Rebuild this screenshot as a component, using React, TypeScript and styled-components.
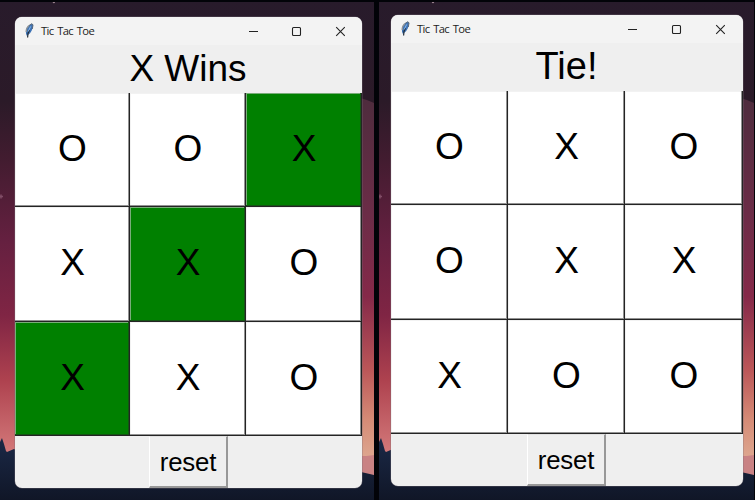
import React from "react";
import styled, { createGlobalStyle } from "styled-components";

const GlobalStyle = createGlobalStyle`
  * { box-sizing: border-box; }
  body { margin: 0; background: #020308; overflow: hidden; }
`;

const Desktops = styled.main`
  display: flex;
  gap: 5px;
  width: 755px;
  height: 500px;
  padding: 2px 1px 0 0;
  background: #020308;
`;

const Desktop = styled.section<{ $pad: string; $width: number }>`
  position: relative;
  width: ${(p) => p.$width}px;
  flex: none;
  height: 498px;
  padding: ${(p) => p.$pad};
  overflow: hidden;
`;

const Wallpaper = styled.svg`
  position: absolute;
  inset: 0;
  width: 100%;
  height: 100%;
`;

const Frame = styled.article`
  position: relative;
  display: flex;
  flex-direction: column;
  height: 100%;
  border-radius: 7px;
  overflow: hidden;
  background: #efefef;
  box-shadow: 0 0 0 0.5px rgba(120, 110, 120, 0.6);
`;

const TitleBar = styled.header`
  display: flex;
  align-items: center;
  flex: none;
  height: 28px;
  padding-left: 8px;
  background: #f3f3f3;
`;

const Title = styled.span`
  margin-left: 5px;
  flex: 1;
  font: 11.2px/16px "Open Sans", "Noto Sans", sans-serif;
  letter-spacing: -0.58px;
  word-spacing: 1.2px;
  color: #222;
  white-space: nowrap;
`;

const Controls = styled.div<{ $step: number; $end: number }>`
  display: grid;
  grid-template-columns: repeat(3, ${(p) => p.$step}px);
  justify-items: center;
  margin-right: ${(p) => p.$end}px;
`;

const ControlIcon = styled.svg`
  width: 11px;
  height: 11px;
  fill: none;
  stroke: #222;
  stroke-width: 1.1;
`;

const Status = styled.div<{ $size: number }>`
  flex: none;
  height: 48px;
  padding-right: 1px;
  font: ${(p) => p.$size}px/47px "Liberation Sans", Arial, sans-serif;
  text-align: center;
  color: #000;
`;

const Board = styled.div<{ $columns: string; $rows: string }>`
  display: grid;
  flex: none;
  grid-template-columns: ${(p) => p.$columns};
  grid-template-rows: ${(p) => p.$rows};
`;

const Cell = styled.button<{ $won: boolean }>`
  display: flex;
  align-items: center;
  justify-content: center;
  padding: 0 0 2px 1px;
  border: 0 solid #242424;
  border-width: 0 1px 1px 0;
  border-radius: 0;
  background: ${(p) => (p.$won ? "#008000" : "#fff")};
  box-shadow: ${(p) =>
    p.$won
      ? "inset -1px -1px #145514, inset 1px 1px #79ad79"
      : "inset -1px -1px #929292, inset 1px 1px #f2f2f2"};
  font: 37px/42px "Liberation Sans", Arial, sans-serif;
  color: #000;
`;

const Footer = styled.footer<{ $offset: number }>`
  display: flex;
  flex: 1;
  padding-left: ${(p) => p.$offset}px;
`;

const ResetButton = styled.button`
  width: 79px;
  height: 52px;
  padding: 1px 0 0;
  border-style: solid;
  border-width: 1px 2px 2px 1px;
  border-color: #e1e1e1 #989898 #989898 #fff;
  border-radius: 0;
  background: #efefef;
  font: 25.8px/48px "Liberation Sans", Arial, sans-serif;
  letter-spacing: -0.2px;
  color: #000;
`;

function Scenery({ id }: { id: string }) {
  return (
    <Wallpaper viewBox="0 0 375 498" preserveAspectRatio="none" aria-hidden="true">
      <defs>
        <linearGradient id={`${id}-sky`} x1="0" y1="0" x2="0" y2="1">
          <stop offset="0" stopColor="#281b2b" />
          <stop offset=".2" stopColor="#2b1a28" />
          <stop offset=".32" stopColor="#431c30" />
          <stop offset=".48" stopColor="#652040" />
          <stop offset=".63" stopColor="#802544" />
          <stop offset=".76" stopColor="#ae424f" />
          <stop offset=".9" stopColor="#d27778" />
        </linearGradient>
        <linearGradient id={`${id}-planet`} x1="0" y1="0" x2="0" y2="1">
          <stop offset="0" stopColor="#4d2c3d" />
          <stop offset=".33" stopColor="#6b2c47" />
          <stop offset=".56" stopColor="#852949" />
          <stop offset=".76" stopColor="#bb5658" />
          <stop offset=".9" stopColor="#d58b76" />
          <stop offset="1" stopColor="#dda58e" />
        </linearGradient>
        <linearGradient id={`${id}-hill`} x1="0" y1="0" x2="0" y2="1">
          <stop offset="0" stopColor="#1b2947" />
          <stop offset="1" stopColor="#101627" />
        </linearGradient>
      </defs>
      <rect width="375" height="498" fill={`url(#${id}-sky)`} />
      <path d="M340 92Q360 94 375 101V454H340Z" fill={`url(#${id}-planet)`} />
      <path d="M340 454Q360 456 375 453V480H340Z" fill="#c98284" />
      <path
        d="M0 440L2 436L4 442L6 449L7 450L14 447L30 454L100 470L310 468L362 470L375 473V498H0Z"
        fill={`url(#${id}-hill)`}
      />
      <path d="M1 192.5V196.5M-1 194.5H3" stroke="#95627b" strokeWidth="1.5" opacity=".7" />
      <circle cx="54" cy="0" r="1.2" fill="#9c8490" />
    </Wallpaper>
  );
}

function Feather() {
  return (
    <svg width="13" height="16" viewBox="0 0 13 16" aria-hidden="true">
      <path d="M4 13C2 10 3 5 6 2.5L9 .7L10 2C10 6 8 10 5 12Z" fill="#3e73b5" />
      <path d="M6 2.5L9 .7L10 2L9.3 6" fill="none" stroke="#596879" strokeWidth="1" />
      <path d="M3.2 9Q3.1 5 6 2.5" fill="none" stroke="#8b9298" strokeWidth="1.4" />
      <path d="M4.6 14.5L5 10.5L6.5 7" fill="none" stroke="#202a36" strokeWidth="1.2" />
      <path d="M5.2 8.5L7.7 3.4" stroke="#8cb9ea" strokeWidth="1" />
    </svg>
  );
}

interface GameProps {
  status: string;
  statusSize: number;
  marks: string;
  winning?: number[];
  columns: string;
  rows: string;
  footerOffset: number;
  controlStep: number;
  controlEnd: number;
}

function Game(props: GameProps) {
  return (
    <Frame>
      <TitleBar>
        <Feather />
        <Title>Tic Tac Toe</Title>
        <Controls $step={props.controlStep} $end={props.controlEnd}>
          <ControlIcon viewBox="0 0 11 11"><path d="M1 5.5H10" /></ControlIcon>
          <ControlIcon viewBox="0 0 11 11"><rect x="1.5" y="1.5" width="8" height="8" rx="1" /></ControlIcon>
          <ControlIcon viewBox="0 0 11 11"><path d="M1.2 1.2L9.8 9.8M9.8 1.2L1.2 9.8" /></ControlIcon>
        </Controls>
      </TitleBar>
      <Status $size={props.statusSize}>{props.status}</Status>
      <Board $columns={props.columns} $rows={props.rows}>
        {props.marks.split("").map((mark, i) => (
          <Cell key={i} $won={props.winning?.includes(i) ?? false}>{mark}</Cell>
        ))}
      </Board>
      <Footer $offset={props.footerOffset}>
        <ResetButton>reset</ResetButton>
      </Footer>
    </Frame>
  );
}

export default function App() {
  return (
    <>
      <GlobalStyle />
      <Desktops>
        <Desktop $width={374} $pad="15px 12px 12px 15px">
          <Scenery id="left" />
          <Game
            status="X Wins"
            statusSize={37}
            marks="OOXXXOXXO"
            winning={[2, 4, 6]}
            columns="115px 116px 116px"
            rows="114px 115px 114px"
            footerOffset={134}
            controlStep={43.5}
            controlEnd={0}
          />
        </Desktop>
        <Desktop $width={375} $pad="13px 11px 14px 12px">
          <Scenery id="right" />
          <Game
            status="Tie!"
            statusSize={38}
            marks="OXOOXXXOO"
            columns="117px 117px 118px"
            rows="114px 115px 114px"
            footerOffset={136}
            controlStep={44}
            controlEnd={1}
          />
        </Desktop>
      </Desktops>
    </>
  );
}
